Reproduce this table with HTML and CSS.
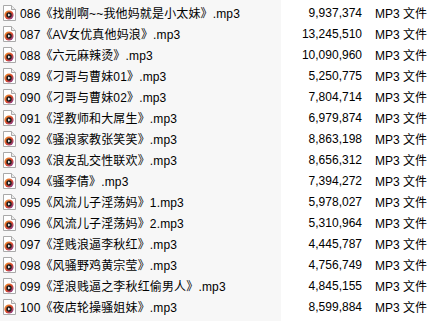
FILE: index.html
```html
<!DOCTYPE html>
<html lang="zh-CN">
<head>
<meta charset="utf-8">
<title>MP3 文件列表</title>
<link rel="stylesheet" href="styles.css">
</head>
<body>
<svg width="0" height="0" class="defs" aria-hidden="true">
  <defs>
    <linearGradient id="ring" x1="0" y1="0" x2="1" y2="1">
      <stop offset="0" stop-color="#f39a2a"/>
      <stop offset="0.55" stop-color="#d8452f"/>
      <stop offset="1" stop-color="#6b3aa8"/>
    </linearGradient>
    <symbol id="mp3" viewBox="0 0 13 16">
      <path d="M0.5 0.5 H8.5 L12.5 4.5 V15.5 H0.5 Z" fill="#fff" stroke="#a9a9a9"/>
      <path d="M8.5 0.5 V4.5 H12.5" fill="#ececec" stroke="#a9a9a9"/>
      <circle cx="6" cy="10" r="4.6" fill="url(#ring)"/>
      <circle cx="6" cy="10" r="2.7" fill="#1a1a1a"/>
      <path d="M5.1 8.5 L7.6 10 L5.1 11.5 Z" fill="#fff"/>
    </symbol>
  </defs>
</svg>
<div class="list">
  <div class="row"><div class="name"><svg class="ico"><use href="#mp3"/></svg><span>086《找削啊~~我他妈就是小太妹》.mp3</span></div><div class="size">9,937,374</div><div class="type">MP3 文件</div></div>
  <div class="row"><div class="name"><svg class="ico"><use href="#mp3"/></svg><span>087《AV女优真他妈浪》.mp3</span></div><div class="size">13,245,510</div><div class="type">MP3 文件</div></div>
  <div class="row"><div class="name"><svg class="ico"><use href="#mp3"/></svg><span>088《六元麻辣烫》.mp3</span></div><div class="size">10,090,960</div><div class="type">MP3 文件</div></div>
  <div class="row"><div class="name"><svg class="ico"><use href="#mp3"/></svg><span>089《刁哥与曹妹01》.mp3</span></div><div class="size">5,250,775</div><div class="type">MP3 文件</div></div>
  <div class="row"><div class="name"><svg class="ico"><use href="#mp3"/></svg><span>090《刁哥与曹妹02》.mp3</span></div><div class="size">7,804,714</div><div class="type">MP3 文件</div></div>
  <div class="row"><div class="name"><svg class="ico"><use href="#mp3"/></svg><span>091《淫教师和大屌生》.mp3</span></div><div class="size">6,979,874</div><div class="type">MP3 文件</div></div>
  <div class="row"><div class="name"><svg class="ico"><use href="#mp3"/></svg><span>092《骚浪家教张笑笑》.mp3</span></div><div class="size">8,863,198</div><div class="type">MP3 文件</div></div>
  <div class="row"><div class="name"><svg class="ico"><use href="#mp3"/></svg><span>093《浪友乱交性联欢》.mp3</span></div><div class="size">8,656,312</div><div class="type">MP3 文件</div></div>
  <div class="row"><div class="name"><svg class="ico"><use href="#mp3"/></svg><span>094《骚李倩》.mp3</span></div><div class="size">7,394,272</div><div class="type">MP3 文件</div></div>
  <div class="row"><div class="name"><svg class="ico"><use href="#mp3"/></svg><span>095《风流儿子淫荡妈》1.mp3</span></div><div class="size">5,978,027</div><div class="type">MP3 文件</div></div>
  <div class="row"><div class="name"><svg class="ico"><use href="#mp3"/></svg><span>096《风流儿子淫荡妈》2.mp3</span></div><div class="size">5,310,964</div><div class="type">MP3 文件</div></div>
  <div class="row"><div class="name"><svg class="ico"><use href="#mp3"/></svg><span>097《淫贱浪逼李秋红》.mp3</span></div><div class="size">4,445,787</div><div class="type">MP3 文件</div></div>
  <div class="row"><div class="name"><svg class="ico"><use href="#mp3"/></svg><span>098《风骚野鸡黄宗莹》.mp3</span></div><div class="size">4,756,749</div><div class="type">MP3 文件</div></div>
  <div class="row"><div class="name"><svg class="ico"><use href="#mp3"/></svg><span>099《淫浪贱逼之李秋红偷男人》.mp3</span></div><div class="size">4,845,155</div><div class="type">MP3 文件</div></div>
  <div class="row"><div class="name"><svg class="ico"><use href="#mp3"/></svg><span>100《夜店轮操骚姐妹》.mp3</span></div><div class="size">8,599,884</div><div class="type">MP3 文件</div></div>
</div>
</body>
</html>
```

FILE: styles.css
```css
html, body {
  margin: 0;
  padding: 0;
  background: #fff;
}
body {
  font-family: "Liberation Sans", "Noto Sans CJK SC", sans-serif;
  font-size: 12px;
  color: #000;
  overflow: hidden;
}
.defs {
  position: absolute;
  width: 0;
  height: 0;
}
.list {
  box-sizing: border-box;
  min-height: 100vh;
  padding-top: 2px;
  display: flex;
  flex-direction: column;
  background: linear-gradient(to right, #f7f7f7 281px, #fff 281px);
}
.row {
  display: grid;
  grid-template-columns: 281px 81px 13px auto;
  height: 21px;
  align-items: center;
  white-space: nowrap;
}
.name {
  display: flex;
  align-items: center;
  gap: 4px;
  padding-left: 3px;
  overflow: hidden;
  letter-spacing: 0.15px;
}
.ico {
  width: 13px;
  height: 16px;
  flex: none;
}
.size {
  text-align: right;
}
.type {
  grid-column: 4;
}
```
